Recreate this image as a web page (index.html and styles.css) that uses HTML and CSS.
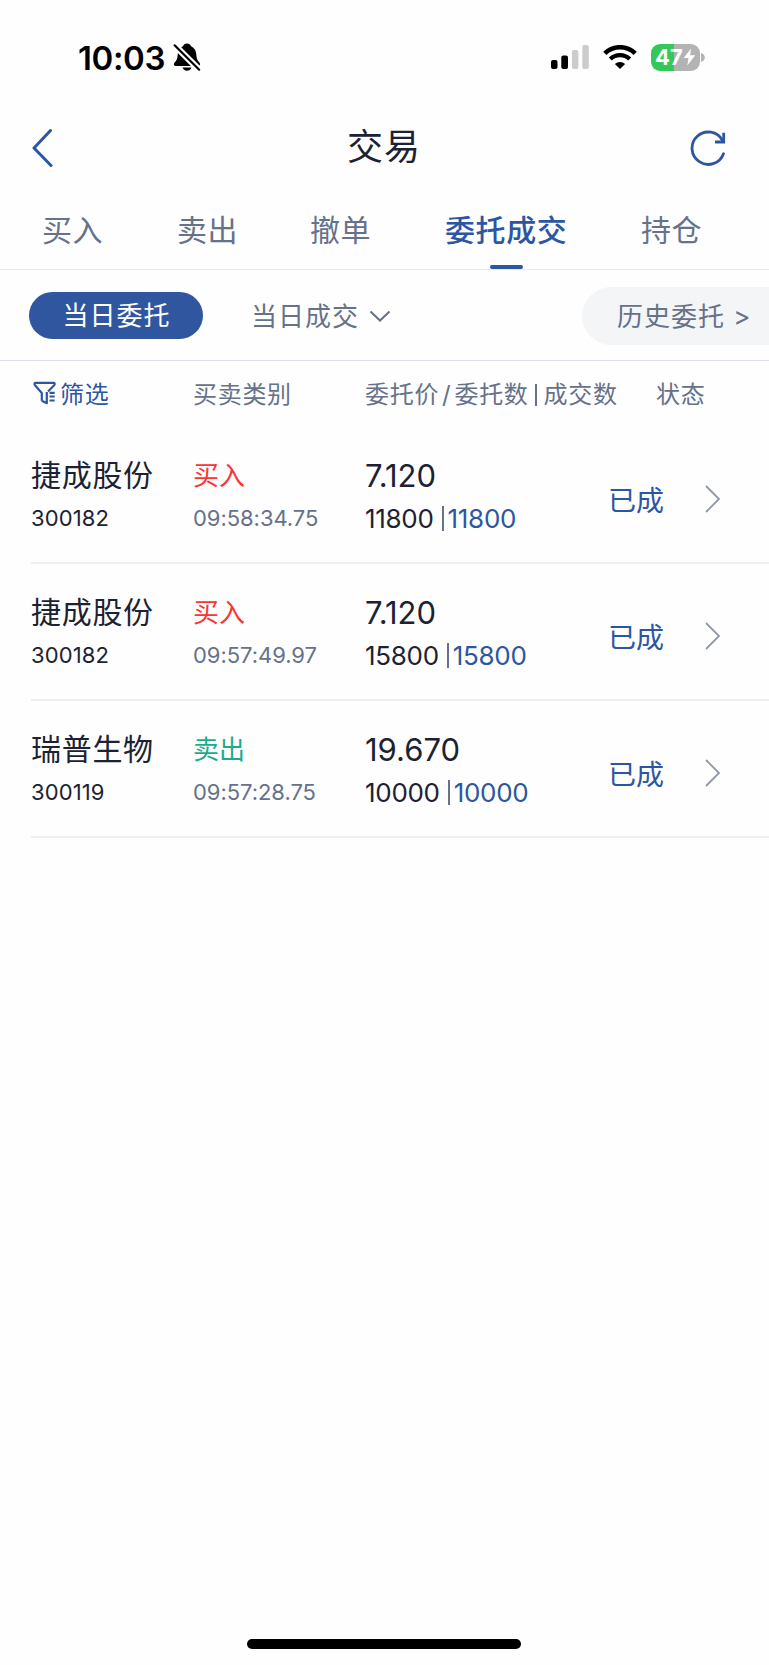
FILE: index.html
```html
<!DOCTYPE html>
<html lang="zh-CN">
<head>
    <meta charset="UTF-8">
    <meta name="viewport" content="width=device-width, initial-scale=1.0">
    <title>交易</title>
    <link rel="stylesheet" href="styles.css">
</head>
<body>
    <div class="status-bar">
        <span class="time">10:03</span>
        <svg class="bell" width="28" height="30" viewBox="0 0 28 30">
            <path d="M14 1.500c-2 0-3.600 1.200-4.100 2.700C6.500 5.700 5 8.600 4.700 12.500c-.2 3.500-.7 5.400-2.400 7.300C1.200 21 .9 21.700.9 22.300c0 1 .7 1.600 1.800 1.600h22.600c1.100 0 1.800-.6 1.800-1.600 0-.6-.3-1.300-1.400-2.500-1.700-1.900-2.200-3.800-2.400-7.300-.3-3.900-1.800-6.800-5.200-8.300C17.600 2.700 16 1.500 14 1.500z"/>
            <path d="M9.500 25.500h9c-.6 2-2.300 3.200-4.500 3.200s-3.900-1.200-4.500-3.200z"/>
            <path d="M-1 .7 27 28.500" stroke="#fefefe" stroke-width="6.500"/>
            <path d="M1.600 3.300 26.200 27.700" stroke="#000" stroke-width="2.200" stroke-linecap="round"/>
        </svg>
        <svg class="signal" width="38" height="24" viewBox="0 0 38 24">
            <rect x="0" y="15" width="6.500" height="9" rx="2"/>
            <rect x="10.300" y="10.500" width="6.700" height="13.500" rx="2"/>
            <rect x="20.900" y="5" width="6.500" height="19" rx="2" fill="#ccc"/>
            <rect x="31.300" y="0" width="6.500" height="24" rx="2" fill="#ccc"/>
        </svg>
        <svg class="wifi" width="34" height="24" viewBox="0 0 34 24">
            <path d="M1.800 8.400a21.800 21.800 0 0 1 30.400 0" fill="none" stroke="#000" stroke-width="4.600"/>
            <path d="M7.300 14a14 14 0 0 1 19.400 0" fill="none" stroke="#000" stroke-width="4.400"/>
            <path d="M11.900 19a7.400 7.400 0 0 1 10.200 0L17 24z"/>
        </svg>
        <div class="battery">
            <span>47</span>
            <svg width="13" height="18" viewBox="0 0 13 18"><path d="M8 .5.700 10h4.800L4.300 17.500 12.300 7.300H7.200z" fill="#fff"/></svg>
        </div>
        <svg class="nub" width="4" height="9" viewBox="0 0 4 9"><path d="M0 0c5 1.500 5 7.500 0 9z" fill="#b3b3b3"/></svg>
    </div>

    <header class="header">
        <svg width="22" height="40" viewBox="0 0 22 40"><path d="M19.500 2.500 3 20l17 17.500" fill="none" stroke="#2c56a3" stroke-width="3" stroke-linecap="round" stroke-linejoin="round"/></svg>
        <h1>交易</h1>
        <svg width="36" height="36" viewBox="0 0 36 36" fill="none" stroke="#2c56a3" stroke-width="2.800">
            <path d="M33.500 23.700A16.200 16.200 0 1 1 32.500 10.500" stroke-linecap="round"/>
            <path d="M33.700 2.700v9.300h-8.700"/>
        </svg>
    </header>

    <nav class="tabs">
        <a>买入</a>
        <a>卖出</a>
        <a>撤单</a>
        <a class="active">委托成交</a>
        <a>持仓</a>
    </nav>

    <div class="filters">
        <a class="pill">当日委托</a>
        <a class="today">当日成交
            <svg width="22" height="12" viewBox="0 0 22 12"><path d="M1.500 1.500 11 10.500l9.500-9" fill="none" stroke="#66718a" stroke-width="2"/></svg>
        </a>
        <a class="history">历史委托 <span>&gt;</span></a>
    </div>

    <div class="columns">
        <span class="sift">
            <svg width="24" height="24" viewBox="0 0 24 24" fill="none" stroke="#2c56a3" stroke-width="2.200">
                <path d="M8.800 19.800V12L2 4.200C1 2.800 1.400 1.900 2.800 1.900h17.600c1.400 0 1.800.9.800 2.300L15 10.500M8.800 19.800l5 2.400V11" stroke-linejoin="round"/>
                <path d="M16.500 11.800h5.200M16.500 15.500h5.200M16.500 19.500h5.200"/>
            </svg>筛选</span>
        <span>买卖类别</span>
        <span>委托价<i>/</i>委托数<i class="bar"></i>成交数</span>
        <span class="state">状态</span>
    </div>

    <div class="list">
        <div class="row">
            <div><p class="name">捷成股份</p><p class="code">300182</p></div>
            <div><p class="side buy">买入</p><p class="clock">09:58:34.75</p></div>
            <div><p class="price">7.120</p><p class="qty">11800<i></i><b>11800</b></p></div>
            <span class="done">已成</span>
            <svg width="16" height="28" viewBox="0 0 16 28"><path d="M1 1l13 13L1 27" fill="none" stroke="#8f98ab" stroke-width="1.800"/></svg>
        </div>
        <div class="row">
            <div><p class="name">捷成股份</p><p class="code">300182</p></div>
            <div><p class="side buy">买入</p><p class="clock">09:57:49.97</p></div>
            <div><p class="price">7.120</p><p class="qty">15800<i></i><b>15800</b></p></div>
            <span class="done">已成</span>
            <svg width="16" height="28" viewBox="0 0 16 28"><path d="M1 1l13 13L1 27" fill="none" stroke="#8f98ab" stroke-width="1.800"/></svg>
        </div>
        <div class="row">
            <div><p class="name">瑞普生物</p><p class="code">300119</p></div>
            <div><p class="side sell">卖出</p><p class="clock">09:57:28.75</p></div>
            <div><p class="price">19.670</p><p class="qty">10000<i></i><b>10000</b></p></div>
            <span class="done">已成</span>
            <svg width="16" height="28" viewBox="0 0 16 28"><path d="M1 1l13 13L1 27" fill="none" stroke="#8f98ab" stroke-width="1.800"/></svg>
        </div>
    </div>

    <div class="home-bar"></div>
</body>
</html>
```
FILE: styles.css
```css
* {
    margin: 0;
    padding: 0;
    box-sizing: border-box;
}

body {
    display: flex;
    flex-direction: column;
    height: 1665px;
    overflow: hidden;
    background: #fefefe;
    color: #1c2233;
    font-family: "Inter", "Noto Sans CJK SC", sans-serif;
    white-space: nowrap;
}

svg {
    display: block;
    flex: none;
}

i {
    font-style: normal;
}

/* status bar */
.status-bar {
    display: flex;
    align-items: center;
    height: 114px;
    padding-left: 78px;
    color: #000;
}

.time {
    width: 95px;
    padding-top: 1px;
    font-size: 33px;
    font-weight: 600;
    letter-spacing: -0.4px;
    line-height: 40px;
}

.signal {
    margin-left: 350px;
}

.wifi {
    margin-left: 14px;
}

.battery {
    display: flex;
    align-items: center;
    width: 49px;
    height: 27px;
    margin-left: 14px;
    padding-left: 4px;
    border-radius: 9px;
    background: linear-gradient(90deg, #34c759 23px, #b3b3b3 23px);
    color: #fff;
    font-size: 22px;
    font-weight: 700;
}

.nub {
    margin-left: 1px;
}

/* title */
.header {
    display: grid;
    grid-template-columns: 316px 343px 36px;
    align-items: center;
    height: 68px;
    padding-left: 31px;
}

.header h1 {
    font-size: 36px;
    font-weight: 400;
    letter-spacing: 1px;
    line-height: 66px;
    padding-bottom: 2px;
}

/* tabs */
.tabs {
    display: grid;
    grid-template-columns: 135px 133px 135px 196px auto;
    height: 88px;
    padding-left: 42px;
    border-bottom: 1px solid #e6e8eb;
    color: #66718a;
    font-size: 30px;
    letter-spacing: 0.6px;
    line-height: 97px;
}

.tabs .active {
    position: relative;
    color: #2c56a3;
    font-weight: 500;
}

.tabs .active::after {
    content: "";
    position: absolute;
    left: 45px;
    bottom: 10px;
    width: 33px;
    height: 4px;
    border-radius: 2px;
    background: #2c56a3;
}

/* filter pills */
.filters {
    display: flex;
    align-items: center;
    height: 91px;
    padding-left: 29px;
    border-bottom: 1px solid #dde0e8;
    color: #66718a;
    font-size: 26px;
    letter-spacing: 1px;
}

.pill {
    width: 174px;
    height: 47px;
    margin-top: 1px;
    padding-left: 1px;
    border-radius: 24px;
    background: #2f569e;
    color: #fff;
    line-height: 48px;
    text-align: center;
}

.today {
    display: flex;
    align-items: center;
    gap: 10px;
    width: 331px;
    margin: 2px 0 0 48px;
    line-height: 31px;
}

.history {
    flex: 1;
    height: 58px;
    margin-top: 2px;
    padding-left: 35px;
    border-radius: 30px 0 0 30px;
    background: #f3f5f7;
    line-height: 59px;
}

/* table head */
.columns,
.row {
    display: grid;
    grid-template-columns: 162px 172px 243px 97px auto;
    align-items: center;
}

.columns {
    height: 66px;
    padding: 0 0 3px 31px;
    color: #66718a;
    font-size: 24px;
    letter-spacing: 0.7px;
}

.columns i {
    padding: 0 3px;
}

.columns .bar {
    display: inline-block;
    width: 2px;
    height: 22px;
    margin: 0 7px 0 6px;
    padding: 0;
    background: #66718a;
    vertical-align: -3px;
}

.sift {
    display: flex;
    align-items: center;
    gap: 3px;
    padding-left: 2px;
    color: #2c56a3;
}

.state {
    padding-left: 48px;
}

/* orders */
.list {
    padding-left: 31px;
}

.row {
    height: 137px;
    padding-top: 4px;
    border-bottom: 2px solid #efeff1;
}

.row p {
    height: 43px;
    line-height: 43px;
}

.name {
    font-size: 30px;
    letter-spacing: 0.7px;
}

.code,
.clock {
    font-size: 22px;
    letter-spacing: 0.1px;
}

.clock {
    color: #66718a;
    letter-spacing: -0.05px;
}

.side {
    font-size: 26px;
}

.buy {
    color: #fb3434;
}

.sell {
    color: #1cac8c;
}

.price {
    font-size: 31px;
}

.qty {
    display: flex;
    align-items: center;
    font-size: 26px;
    letter-spacing: -0.3px;
}

.qty i {
    width: 2px;
    height: 25px;
    margin: 0 4px 0 8px;
    background: #66718a;
}

.qty b {
    color: #2c56a3;
    font-weight: 400;
}

.done {
    padding-top: 4px;
    color: #2c56a3;
    font-size: 28px;
}

.row svg {
    margin-top: 5px;
}

.home-bar {
    width: 274px;
    height: 10px;
    margin: auto auto 16px 247px;
    border-radius: 5px;
    background: #000;
}
```
